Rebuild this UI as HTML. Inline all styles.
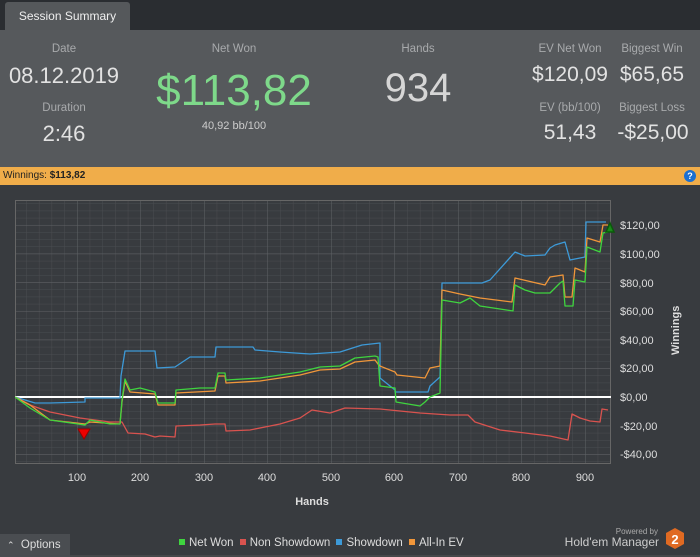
<!DOCTYPE html>
<html><head><meta charset="utf-8"><style>
*{margin:0;padding:0;box-sizing:border-box}
html,body{width:700px;height:557px;overflow:hidden}
body{background:#383b3f;font-family:"Liberation Sans",sans-serif;position:relative;color:#ddd}
.tabbar{position:absolute;left:0;top:0;width:700px;height:30px;background:#2a2d31}
.tab{position:absolute;left:5px;top:2px;width:125px;height:28px;background:#55585b;border-radius:3px 3px 0 0;color:#eee;font-size:12px;text-align:center;line-height:28px}
.sum{position:absolute;left:0;top:30px;width:700px;height:137px;background:#56595c}
.t{position:absolute;text-align:center;color:#a8aaac;font-size:11.5px;white-space:nowrap}
.v{position:absolute;text-align:center;color:#e2e2e2;white-space:nowrap}
.bar{position:absolute;left:0;top:167px;width:700px;height:18px;background:#f0ad4a;color:#222;font-size:10px;line-height:18px;padding-left:3px}
.help{position:absolute;right:4px;top:3px;width:12px;height:12px;border-radius:50%;background:#1b6fd0;color:#fff;font-size:9px;font-weight:bold;text-align:center;line-height:12px}
.opt{position:absolute;left:0;top:534px;width:70px;height:23px;background:#4a4d51;font-size:11.5px;color:#ddd;line-height:23px;padding-left:7px;white-space:nowrap}
.leg{position:absolute;top:537px;left:176px;font-size:11.5px;color:#ddd;white-space:nowrap}
.leg i{display:inline-block;width:6px;height:6px;margin:0 4px 1px 3px}
</style></head><body>
<div class="tabbar"><div class="tab">Session Summary</div></div>
<div class="sum">
<div class="t" style="left:14px;width:100px;top:13px">Date</div>
<div class="v" style="left:4px;width:120px;top:33px;font-size:22px">08.12.2019</div>
<div class="t" style="left:14px;width:100px;top:72px">Duration</div>
<div class="v" style="left:14px;width:100px;top:91px;font-size:22px">2:46</div>
<div class="t" style="left:184px;width:100px;top:13px">Net Won</div>
<div class="v" style="left:134px;width:200px;top:36px;font-size:44px;color:#7ed98a">$113,82</div>
<div class="v" style="left:184px;width:100px;top:90px;font-size:11px;color:#ccc">40,92 bb/100</div>
<div class="t" style="left:368px;width:100px;top:13px">Hands</div>
<div class="v" style="left:368px;width:100px;top:36px;font-size:40px;color:#d6d6d6">934</div>
<div class="t" style="left:520px;width:100px;top:13px">EV Net Won</div>
<div class="v" style="left:520px;width:100px;top:33px;font-size:21px">$120,09</div>
<div class="t" style="left:602px;width:100px;top:13px">Biggest Win</div>
<div class="v" style="left:602px;width:100px;top:33px;font-size:21px">$65,65</div>
<div class="t" style="left:520px;width:100px;top:72px">EV (bb/100)</div>
<div class="v" style="left:520px;width:100px;top:91px;font-size:21px">51,43</div>
<div class="t" style="left:602px;width:100px;top:72px">Biggest Loss</div>
<div class="v" style="left:603px;width:100px;top:91px;font-size:21px">-$25,00</div>
</div>
<div class="bar">Winnings: <b>$113,82</b><div class="help">?</div></div>
<svg style="position:absolute;left:0;top:0" width="700" height="557">
<defs>
<pattern id="mn" patternUnits="userSpaceOnUse" x="13.5" y="397" width="12.7" height="7.167"><path d="M0 0V7.167M0 0H12.7" stroke="#4a4d51" stroke-width="1" fill="none"/></pattern>
<pattern id="mj" patternUnits="userSpaceOnUse" x="13.5" y="397" width="63.5" height="28.67"><path d="M0 0V28.67M0 0H63.5" stroke="#606367" stroke-width="1" fill="none"/></pattern>
<clipPath id="c"><rect x="15" y="200" width="596" height="264"/></clipPath>
</defs>
<rect x="15" y="200" width="596" height="264" fill="#383b3f"/>
<rect x="15" y="200" width="596" height="264" fill="url(#mn)"/>
<rect x="15" y="200" width="596" height="264" fill="url(#mj)"/>
<rect x="15.5" y="200.5" width="595" height="263" fill="none" stroke="#666" />
<g clip-path="url(#c)" fill="none" stroke-width="1.3" stroke-linejoin="round">
<line x1="15" y1="397" x2="611" y2="397" stroke="#fff" stroke-width="2"/>
<polyline stroke="#d9534f" points="15,397 30,405 50,412 60,414 80,418 110,422 122,422 128,433 145,434 155,437 160,436 175,437 176,426 200,425 215,424 225,424 226,431 250,430 280,424 300,418 312,410 330,413 345,408 380,409 400,411 420,413 450,415 468,415 475,422 500,430 525,433 550,436 568,440 572,414 580,418 590,421 600,422 602,409 608,410"/>
<polyline stroke="#3d9ad8" points="15,397 25,400 35,403 50,403 85,402 85,398 120,398 121,376 125,351 155,351 157,368 175,367 190,357 215,357 216,347 253,347 255,350 280,352 310,354 340,352 362,345 380,343 380,378 395,390 395,392 428,392 430,386 440,377 442,283 482,283 490,280 515,252 525,256 545,255 550,248 555,245 565,242 570,260 585,257 586,222 606,222"/>
<polyline stroke="#f0963a" points="15,397 30,405 50,420 85,424 90,422 120,424 122,402 125,381 130,392 155,394 158,405 175,405 176,393 215,391 218,376 225,376 226,383 260,381 300,375 320,370 340,369 355,362 375,360 378,364 380,366 395,372 397,375 425,378 430,368 440,366 442,290 460,294 480,298 512,302 515,278 545,285 550,277 563,275 565,297 572,297 575,268 585,272 587,238 600,242 603,225 608,225"/>
<polyline stroke="#3fd43f" points="15,397 30,408 50,420 85,425 90,420 110,424 120,424 122,400 125,379 130,390 140,388 155,392 158,403 175,403 176,390 200,388 215,388 218,373 225,373 226,380 260,378 300,372 320,367 340,366 355,358 375,356 378,357 380,386 395,388 396,402 420,406 425,402 430,397 440,393 442,300 460,303 470,298 480,306 500,309 513,311 515,285 525,290 535,293 550,293 560,283 563,281 565,306 573,306 575,280 585,282 587,247 600,252 603,233 608,232"/>
</g>
<polygon points="78,429 90,429 84,439" fill="#e00" stroke="#900"/>
<polygon points="606,232 614,232 610,223" fill="#1a8a1a" stroke="#0a5a0a" stroke-width="1.5"/>
<g font-size="11" fill="#ddd" text-anchor="middle">
<text x="77" y="481">100</text><text x="140" y="481">200</text><text x="204" y="481">300</text><text x="267" y="481">400</text><text x="331" y="481">500</text><text x="394" y="481">600</text><text x="458" y="481">700</text><text x="521" y="481">800</text><text x="585" y="481">900</text>
<text x="312" y="505" font-weight="bold">Hands</text>
</g>
<g font-size="11" fill="#ddd">
<text x="620" y="229">$120,00</text><text x="620" y="258">$100,00</text><text x="620" y="287">$80,00</text><text x="620" y="315">$60,00</text><text x="620" y="344">$40,00</text><text x="620" y="372">$20,00</text><text x="620" y="401">$0,00</text><text x="620" y="430">-$20,00</text><text x="620" y="458">-$40,00</text>
<text transform="translate(679,355) rotate(-90)" font-weight="bold">Winnings</text>
</g>
<line x1="0" y1="556" x2="700" y2="556" stroke="#555"/>
<text x="658" y="534" font-size="8" fill="#aaa" text-anchor="end">Powered by</text>
<text x="659" y="546" font-size="12" fill="#ccc" text-anchor="end">Hold'em Manager</text>
<polygon points="675,528 684,533 684,544 675,549 666,544 666,533" fill="#e06a22"/>
<text x="675" y="544" font-size="13" font-weight="bold" fill="#fff" text-anchor="middle">2</text>
</svg>
<div class="opt"><span style="font-size:9px">&#8963;</span>&nbsp;&nbsp;Options</div>
<div class="leg"><i style="background:#3fd43f"></i>Net Won <i style="background:#d9534f"></i>Non Showdown <i style="background:#3d9ad8"></i>Showdown <i style="background:#f0963a"></i>All-In EV</div>
</body></html>
